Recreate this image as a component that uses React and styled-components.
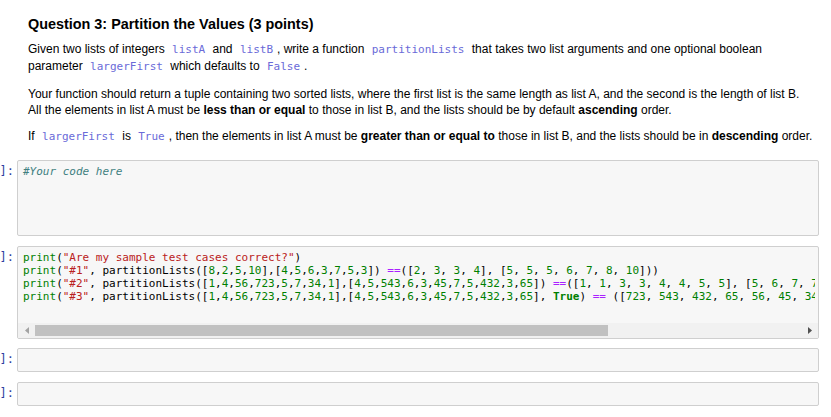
import React from 'react';
import styled, { createGlobalStyle } from 'styled-components';

const GlobalStyle = createGlobalStyle`
    html, body {
        margin: 0;
        padding: 0;
        background: #fff;
    }
    body {
        font-family: "Liberation Sans", Arial, sans-serif;
        color: #000;
    }
`;

const Notebook = styled.div`
    width: 831px;
    height: 417px;
    overflow: hidden;
    padding-top: 16px;
    box-sizing: border-box;
`;

const Cell = styled.div`
    display: flex;
    align-items: flex-start;
    margin-bottom: ${props => props.gap ?? 10}px;
`;

const Prompt = styled.div`
    width: 17px;
    flex: none;
    display: flex;
    justify-content: flex-end;
    overflow: hidden;
    padding-top: 5px;
    padding-right: 3px;
    box-sizing: border-box;
    font-family: "DejaVu Sans Mono", monospace;
    font-size: 12px;
    line-height: 13px;
    color: #303f9f;
    white-space: pre;
`;

const Rendered = styled.div`
    width: 802px;
    flex: none;
    padding: 0 4px 0 11px;
    box-sizing: border-box;
    font-size: 12px;
    line-height: 16px;
`;

const Heading = styled.h3`
    margin: 0 0 8px 0;
    font-size: 14.4px;
    line-height: 17px;
    font-weight: bold;
`;

const Para = styled.p`
    margin: 0 0 10.5px 0;
`;

const InlineCode = styled.code`
    font-family: "DejaVu Sans Mono", monospace;
    font-size: 11px;
    color: #6a6ad8;
    padding: 0 4px;
`;

const InputBox = styled.div`
    width: 802px;
    flex: none;
    box-sizing: border-box;
    background: #f7f7f7;
    border: 1px solid #cfcfcf;
    border-radius: 2px;
    overflow: hidden;
`;

const CodeArea = styled.pre`
    margin: 0 3px 0 0;
    padding: 4px 0 ${props => props.bottom ?? 5}px 5px;
    min-height: ${props => props.minHeight ?? 13}px;
    font-family: "DejaVu Sans Mono", monospace;
    font-size: 11px;
    line-height: 13px;
    color: #000;
    white-space: pre;
    overflow: hidden;
`;

const Comment = styled.span`
    color: #408080;
    font-style: italic;
`;

const Builtin = styled.span`
    color: #008000;
`;

const Str = styled.span`
    color: #ba2121;
`;

const Num = styled.span`
    color: #008000;
`;

const Op = styled.span`
    color: #aa22ff;
`;

const Kw = styled.span`
    color: #008000;
    font-weight: bold;
`;

const ScrollBar = styled.div`
    height: 15px;
    display: flex;
    align-items: center;
    background: #f1f1f1;
`;

const Arrow = styled.div`
    width: 17px;
    height: 15px;
    flex: none;
    display: flex;
    align-items: center;
    justify-content: center;
`;

const Track = styled.div`
    flex: 1;
    height: 15px;
    display: flex;
    align-items: center;
`;

const Thumb = styled.div`
    height: 11px;
    background: #c1c1c1;
`;

const LeftTri = ({ color }) => (
    <svg width="4" height="7" viewBox="0 0 4 7">
        <polygon points="4,0 4,7 0,3.5" fill={color} />
    </svg>
);

const RightTri = ({ color }) => (
    <svg width="4" height="7" viewBox="0 0 4 7">
        <polygon points="0,0 0,7 4,3.5" fill={color} />
    </svg>
);

const list = (nums) =>
    nums.map((n, i) => (
        <React.Fragment key={i}>
            {i > 0 && ','}
            <Num>{n}</Num>
        </React.Fragment>
    ));

const spaced = (nums) =>
    nums.map((n, i) => (
        <React.Fragment key={i}>
            {i > 0 && ', '}
            <Num>{n}</Num>
        </React.Fragment>
    ));

const A2 = [1, 4, 56, 723, 5, 7, 34, 1];
const B2 = [4, 5, 543, 6, 3, 45, 7, 5, 432, 3, 65];

export default function App() {
    return (
        <>
            <GlobalStyle />
            <Notebook>
                <Cell gap={4}>
                    <Prompt />
                    <Rendered>
                        <Heading>Question 3: Partition the Values (3 points)</Heading>
                        <Para>
                            Given two lists of integers <InlineCode>listA</InlineCode> and <InlineCode>listB</InlineCode>, write a function <InlineCode>partitionLists</InlineCode> that takes two list arguments and one optional boolean parameter <InlineCode>largerFirst</InlineCode> which defaults to <InlineCode>False</InlineCode>.
                        </Para>
                        <Para>
                            Your function should return a tuple containing two sorted lists, where the first list is the same length as list A, and the second is the length of list B. All the elements in list A must be <b>less than or equal</b> to those in list B, and the lists should be by default <b>ascending</b> order.
                        </Para>
                        <Para>
                            If <InlineCode>largerFirst</InlineCode> is <InlineCode>True</InlineCode>, then the elements in list A must be <b>greater than or equal to</b> those in list B, and the lists should be in <b>descending</b> order.
                        </Para>
                    </Rendered>
                </Cell>

                <Cell gap={10}>
                    <Prompt>In [ ]:</Prompt>
                    <InputBox>
                        <CodeArea minHeight={66} bottom={4}>
                            <Comment>#Your code here</Comment>
                        </CodeArea>
                    </InputBox>
                </Cell>

                <Cell gap={9}>
                    <Prompt>In [ ]:</Prompt>
                    <InputBox>
                        <CodeArea bottom={20}>
                            <Builtin>print</Builtin>(<Str>"Are my sample test cases correct?"</Str>){'\n'}
                            <Builtin>print</Builtin>(<Str>"#1"</Str>, partitionLists([{list([8, 2, 5, 10])}],[{list([4, 5, 6, 3, 7, 5, 3])}]) <Op>==</Op>([{spaced([2, 3, 3, 4])}], [{spaced([5, 5, 5, 6, 7, 8, 10])}])){'\n'}
                            <Builtin>print</Builtin>(<Str>"#2"</Str>, partitionLists([{list(A2)}],[{list(B2)}]) <Op>==</Op>([{spaced([1, 1, 3, 3, 4, 4, 5, 5])}], [{spaced([5, 6, 7, 7, 34, 45, 56])}])){'\n'}
                            <Builtin>print</Builtin>(<Str>"#3"</Str>, partitionLists([{list(A2)}],[{list(B2)}], <Kw>True</Kw>) <Op>==</Op> ([{spaced([723, 543, 432, 65, 56, 45, 34])}], [{spaced([7, 7, 6, 5, 5])}]))
                        </CodeArea>
                        <ScrollBar>
                            <Arrow><LeftTri color="#a3a3a3" /></Arrow>
                            <Track>
                                <Thumb style={{ width: '74.8%' }} />
                            </Track>
                            <Arrow><RightTri color="#505050" /></Arrow>
                        </ScrollBar>
                    </InputBox>
                </Cell>

                <Cell gap={10}>
                    <Prompt>In [ ]:</Prompt>
                    <InputBox>
                        <CodeArea>{' '}</CodeArea>
                    </InputBox>
                </Cell>

                <Cell gap={10}>
                    <Prompt>In [ ]:</Prompt>
                    <InputBox>
                        <CodeArea>{' '}</CodeArea>
                    </InputBox>
                </Cell>
            </Notebook>
        </>
    );
}
